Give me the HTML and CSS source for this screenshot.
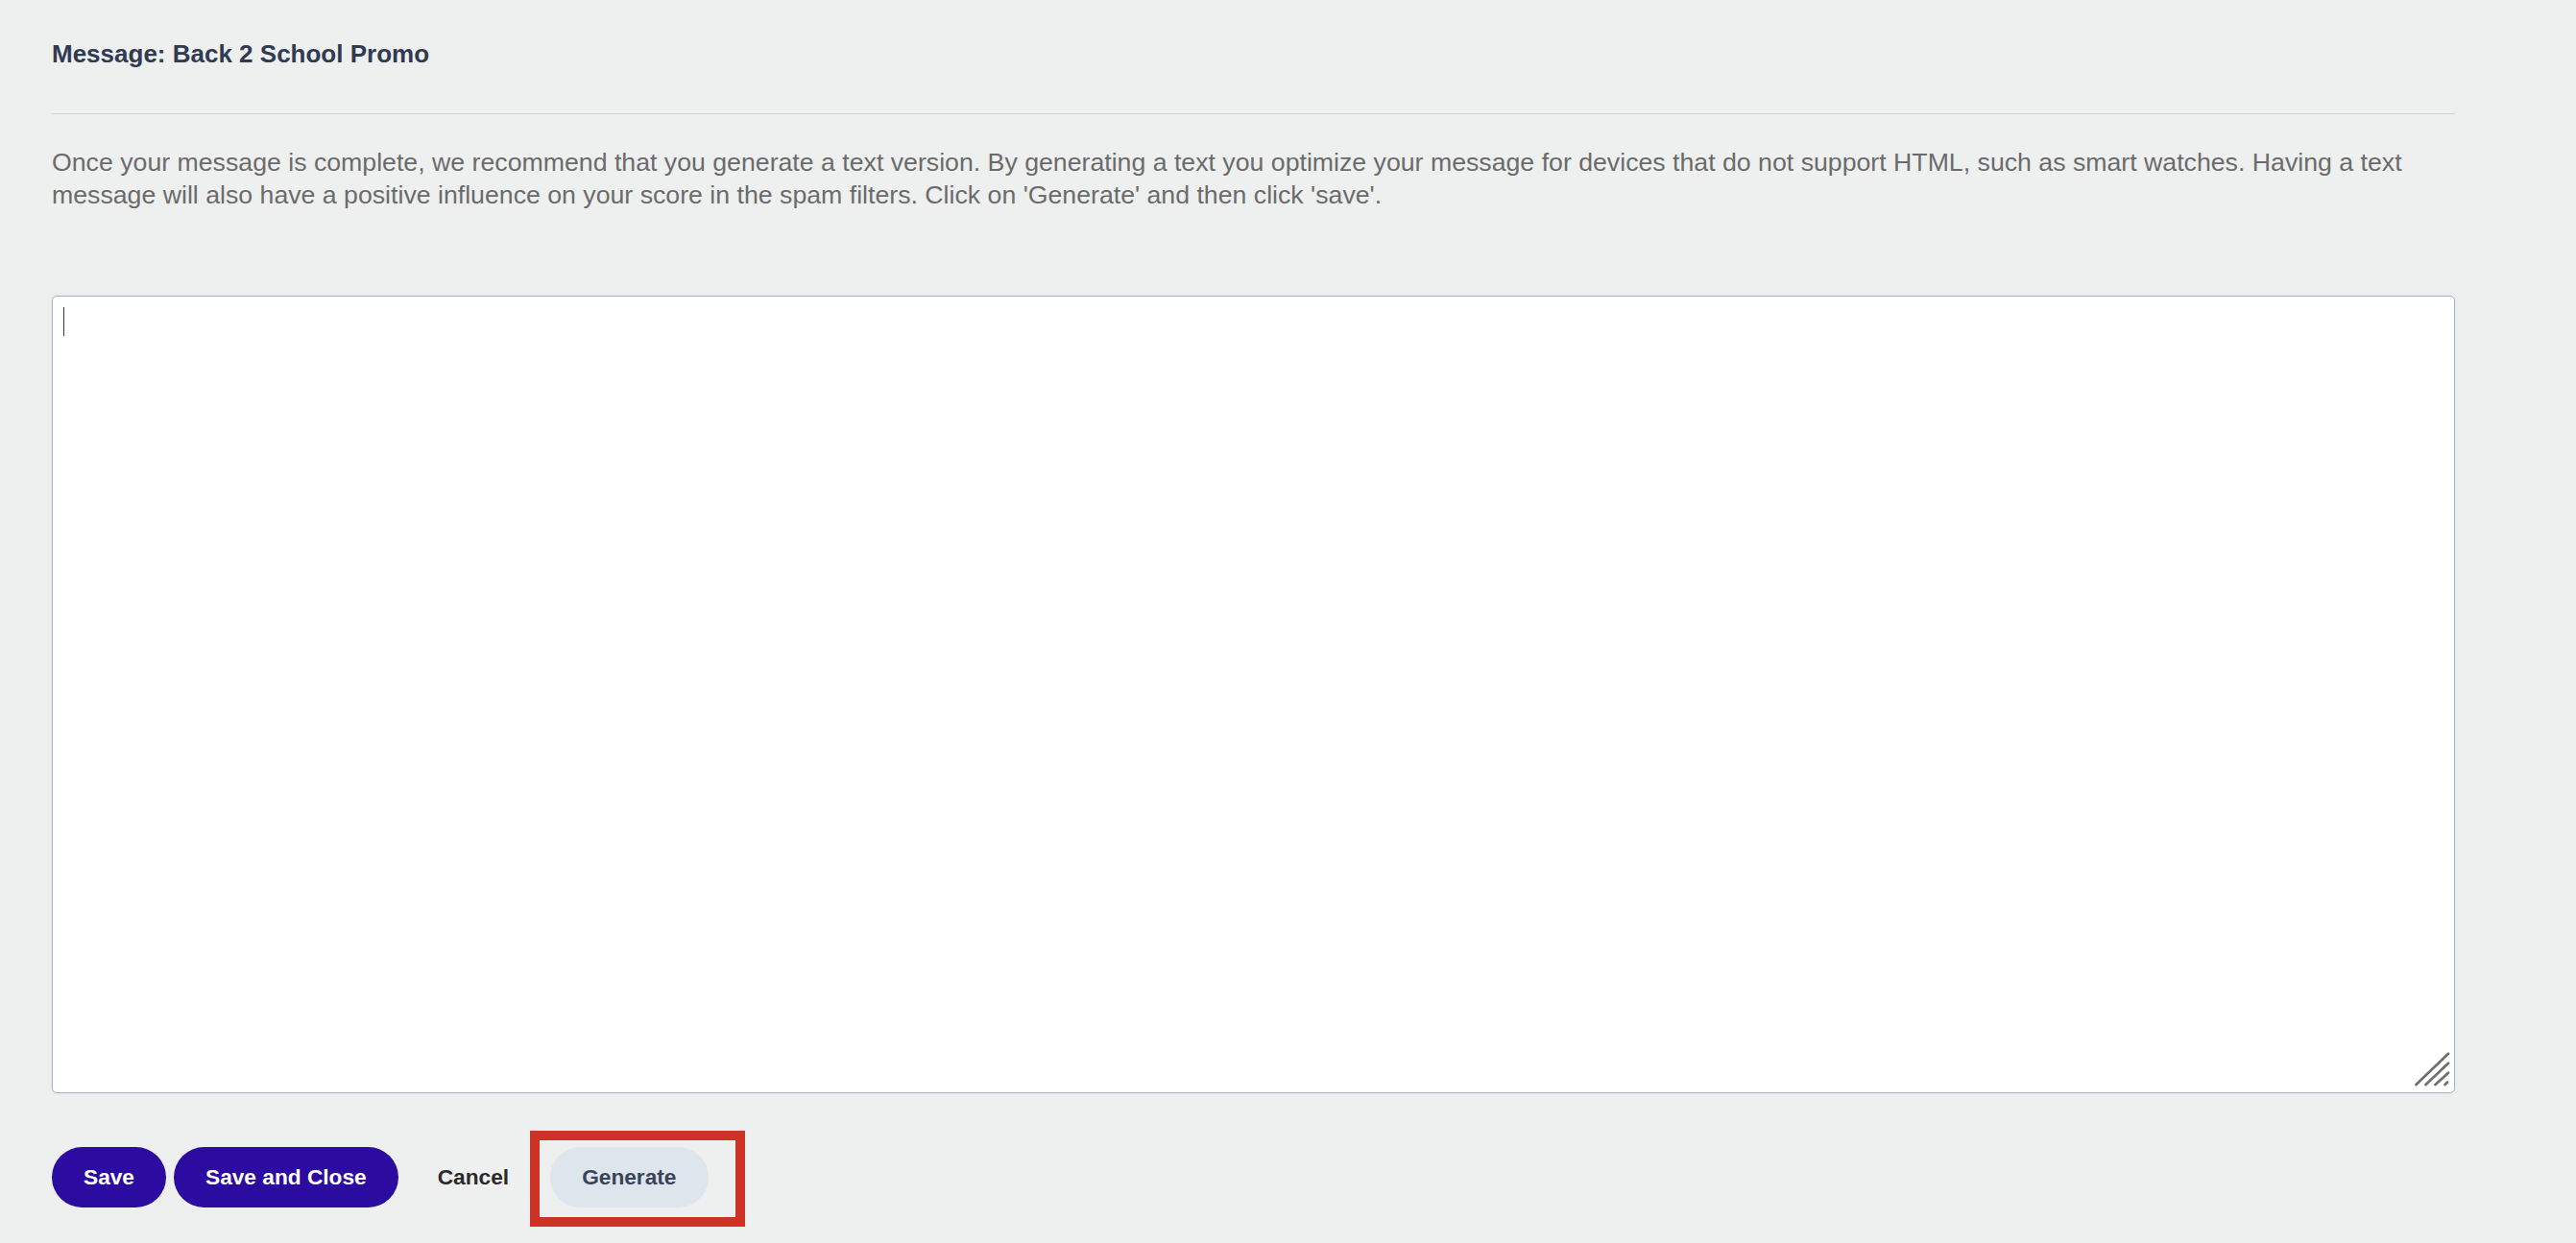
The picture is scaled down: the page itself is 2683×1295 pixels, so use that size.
FILE: index.html
```html
<!DOCTYPE html>
<html lang="en">
<head>
<meta charset="utf-8">
<title>Message: Back 2 School Promo</title>
<link rel="stylesheet" href="styles.css">
</head>
<body>
<main class="page">
  <h1 class="title">Message: Back 2 School Promo</h1>
  <hr class="divider">
  <p class="intro">Once your message is complete, we recommend that you generate a text version. By generating a text you optimize your message for devices that do not support HTML, such as smart watches. Having a text message will also have a positive influence on your score in the spam filters. Click on 'Generate' and then click 'save'.</p>
  <div class="editor">
    <textarea class="editor-input" aria-label="Text version"></textarea>
    <span class="caret"></span>
    <svg class="resizer" width="40" height="40" viewBox="0 0 40 40" aria-hidden="true">
      <g stroke="#6f6f6f" stroke-width="2.7" stroke-linecap="round" fill="none">
        <line x1="2.5" y1="35" x2="36" y2="2.7"/>
        <line x1="12.5" y1="35" x2="36" y2="12.7"/>
        <line x1="22.5" y1="35" x2="36" y2="22.7"/>
        <line x1="32.5" y1="35" x2="35" y2="32.5"/>
      </g>
    </svg>
  </div>
  <div class="actions">
    <button class="btn btn-primary" type="button">Save</button>
    <button class="btn btn-primary" type="button">Save and Close</button>
    <button class="btn btn-link" type="button">Cancel</button>
    <span class="generate-wrap">
      <button class="btn btn-secondary" type="button">Generate</button>
      <span class="highlight"></span>
    </span>
  </div>
</main>
</body>
</html>
```
FILE: styles.css
```css
html, body {
  margin: 0;
  background: #eef0ef;
}

body {
  font-family: "Liberation Sans", Arial, sans-serif;
}

.page {
  padding: 39px 126px 40px 54px;
}

.title {
  margin: 0;
  font-size: 26px;
  line-height: 34px;
  font-weight: 700;
  color: #303a52;
}

.divider {
  margin: 45px 0 0;
  height: 0;
  border: 0;
  border-top: 1px solid #cbd4e3;
}

.intro {
  margin: 33px 0 0;
  font-size: 26.7px;
  line-height: 34px;
  color: #6b6b6b;
}

.editor {
  position: relative;
  margin-top: 88px;
}

.editor-input {
  display: block;
  width: 100%;
  height: 831px;
  box-sizing: border-box;
  margin: 0;
  padding: 12px;
  border: 1px solid #9fb2c6;
  border-radius: 5px;
  background: #fff;
  box-shadow: 0 0 6px rgba(0, 0, 0, 0.04);
  resize: none;
  outline: none;
  font-family: "Liberation Sans", Arial, sans-serif;
  font-size: 26px;
  color: #333;
}

.caret {
  position: absolute;
  left: 12px;
  top: 12px;
  width: 1px;
  height: 30px;
  background: #3a3a3a;
}

.resizer {
  position: absolute;
  right: 3px;
  bottom: 4px;
}

.actions {
  display: flex;
  align-items: center;
  gap: 8px;
  margin-top: 56px;
}

.btn {
  height: 63px;
  padding: 0 33px;
  border: 0;
  border-radius: 32px;
  font-family: "Liberation Sans", Arial, sans-serif;
  font-size: 22.7px;
  font-weight: 700;
  line-height: 1;
  cursor: pointer;
}

.btn-primary {
  background: #2c0ca0;
  color: #fff;
}

.btn-link {
  background: transparent;
  color: #2b2b2b;
}

.generate-wrap {
  position: relative;
  display: inline-flex;
  margin-left: 2px;
}

.btn-secondary {
  background: #dde5ed;
  color: #3a4358;
}

.highlight {
  position: absolute;
  left: -21px;
  top: -17px;
  width: 224px;
  height: 100px;
  box-sizing: border-box;
  border: 10px solid #cc3326;
  pointer-events: none;
}
```
